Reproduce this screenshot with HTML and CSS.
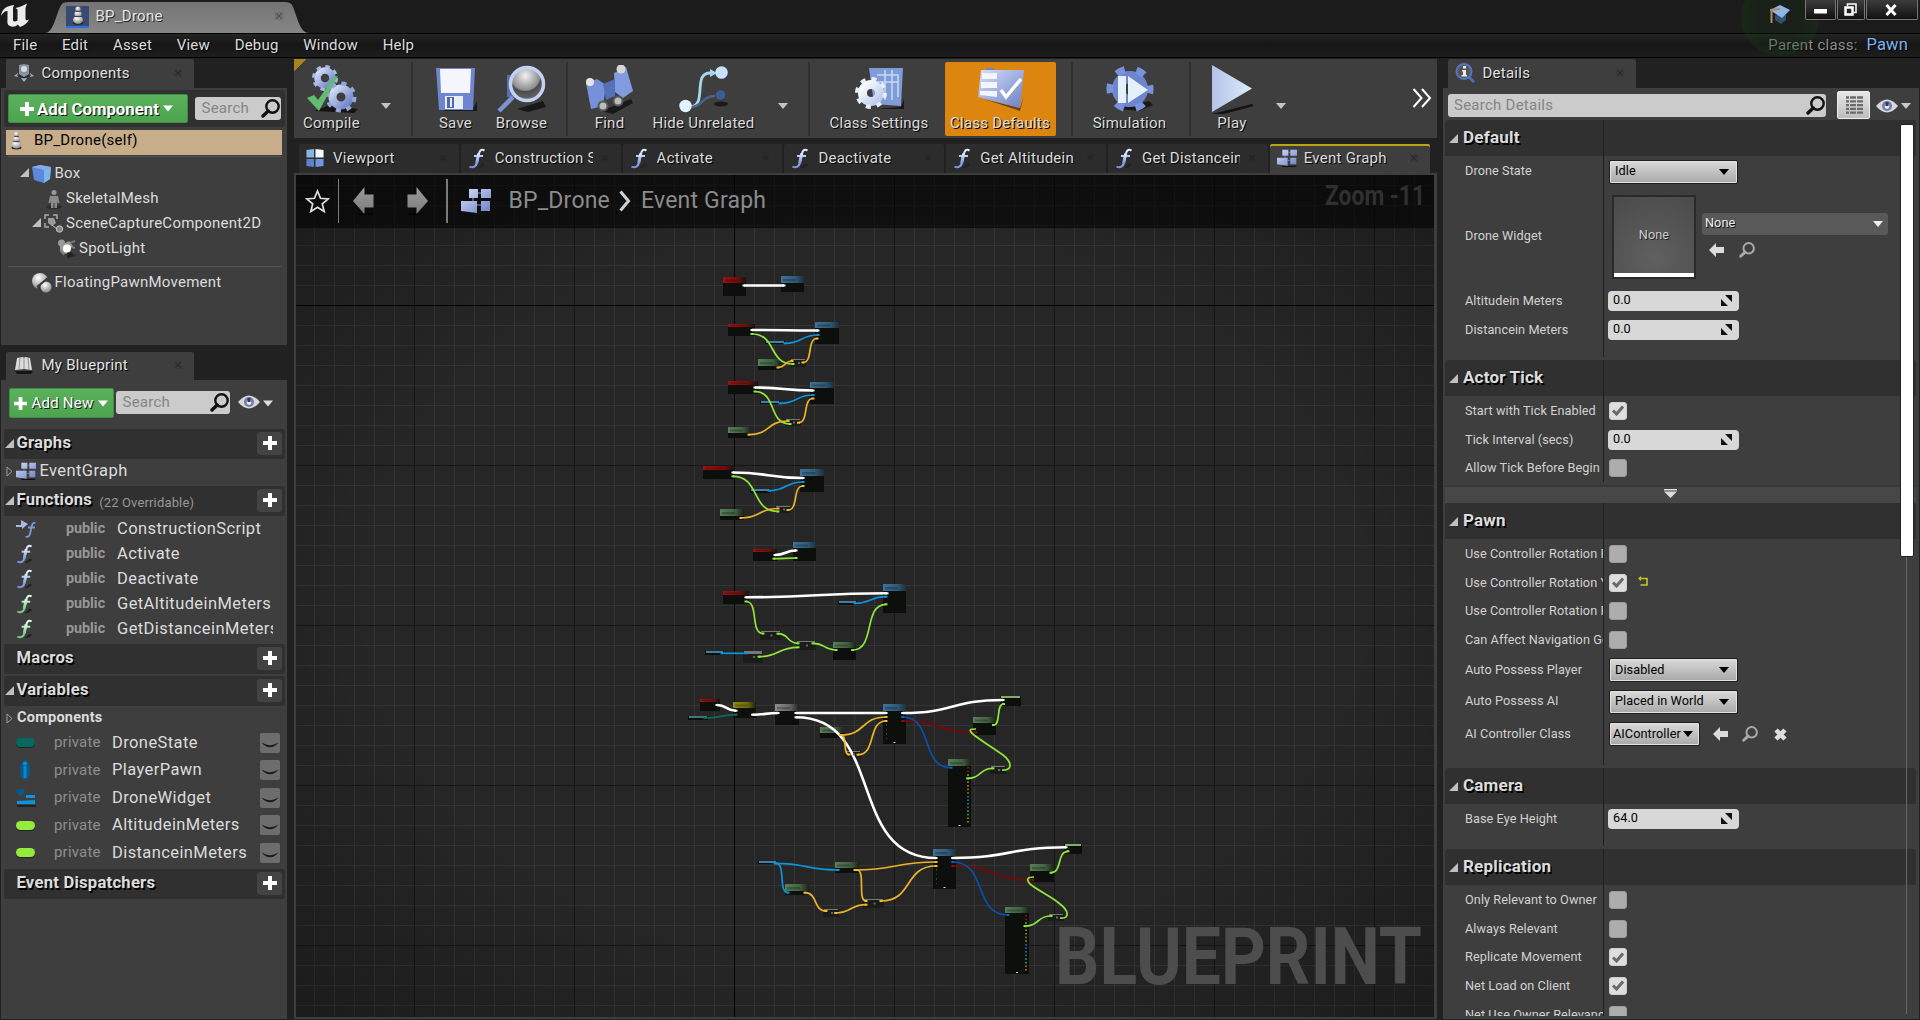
FILE: index.html
```html
<!DOCTYPE html>
<html lang="en">
<head>
<meta charset="utf-8">
<title>BP_Drone</title>
<link rel="stylesheet" href="styles.css">
</head>
<body>
<svg class="defs" width="0" height="0" aria-hidden="true">
  <defs>
    <linearGradient id="steel" x1="0" y1="0" x2="1" y2="1"><stop offset="0" stop-color="#d5e0fa"/><stop offset="1" stop-color="#6b7fc4"/></linearGradient>
    <linearGradient id="pale" x1="0" y1="0" x2="1" y2="1"><stop offset="0" stop-color="#ffffff"/><stop offset="1" stop-color="#b9c9ec"/></linearGradient>
    <linearGradient id="blueF" x1="0" y1="0" x2="0" y2="1"><stop offset="0" stop-color="#e4ecff"/><stop offset="1" stop-color="#7d93dd"/></linearGradient>
    <linearGradient id="greenF" x1="0" y1="0" x2="0" y2="1"><stop offset="0" stop-color="#e0ffe8"/><stop offset="1" stop-color="#72c98a"/></linearGradient>
    <linearGradient id="grayArrow" x1="0" y1="0" x2="0" y2="1"><stop offset="0" stop-color="#9b9b9b"/><stop offset="1" stop-color="#7c7c7c"/></linearGradient>
    <radialGradient id="ball" cx=".4" cy=".3" r=".7"><stop offset="0" stop-color="#fff"/><stop offset="1" stop-color="#8d8d8d"/></radialGradient>
    <radialGradient id="lens" cx=".45" cy=".25" r=".8"><stop offset="0" stop-color="#f2f2f2"/><stop offset=".55" stop-color="#8c8c8c"/><stop offset=".6" stop-color="#4c4c4c"/><stop offset="1" stop-color="#707070"/></radialGradient>
  </defs>
  <symbol id="i-plus" viewBox="0 0 14 14"><path d="M5 0h4v5h5v4H9v5H5V9H0V5h5z"/></symbol>
  <symbol id="i-down" viewBox="0 0 10 6"><path d="M0 0h10L5 6z"/></symbol>
  <symbol id="i-open" viewBox="0 0 9 9"><path d="M9 0v9H0z"/></symbol>
  <symbol id="i-shut" viewBox="0 0 7 11"><path d="M1 1v9l5-4.5z" fill="none" stroke="#9c9c9c"/></symbol>
  <symbol id="i-x" viewBox="0 0 8 8"><path d="M.5.5h7v7h-7z" fill="none" stroke="#2d2d2d" opacity=".4"/><path d="M1.500 1.500l5 5M6.500 1.500l-5 5" stroke="#202020" stroke-width="1.500"/></symbol>
  <symbol id="i-mag" viewBox="0 0 19 19"><circle cx="11.500" cy="7.500" r="6.200" fill="none" stroke="currentColor" stroke-width="2.400"/><path d="M7.200 12L2 17" stroke="currentColor" stroke-width="3.400" stroke-linecap="round"/></symbol>
  <symbol id="i-eye" viewBox="0 0 22 14"><path d="M0 7Q11-6 22 7Q11 20 0 7z" fill="#d8d8d8"/><circle cx="11" cy="7" r="5" fill="#6c7fb0"/><circle cx="11" cy="7.500" r="2.400" fill="#e4e9f5"/><path d="M9.500 3h3v4h-3z" fill="#343b57"/></symbol>
  <symbol id="i-pawn" viewBox="0 0 12 20"><ellipse cx="6" cy="18" rx="5.500" ry="1.800" fill="#222"/><ellipse cx="6" cy="14.500" rx="5.200" ry="4.300" fill="url(#ball)"/><ellipse cx="6" cy="8.500" rx="3.800" ry="3.400" fill="url(#ball)"/><circle cx="6" cy="3.200" r="2.800" fill="url(#ball)"/><path d="M2.500 11h7M3.500 5.700h5" stroke="#3c3c3c"/></symbol>
  <symbol id="i-f" viewBox="0 0 18 21"><path d="M9 20l6-5 2 2-5 3z" fill="#222" stroke="none"/><path d="M16.500 2.600C13 .2 11.300 3.500 10.600 7L9 14.500C8.200 18.500 5.500 20.300 1.500 18.600M6 8h9" fill="none" stroke-width="2.100"/><path d="M10.700 5.500L8.600 15.500" stroke-width="3"/></symbol>
  <symbol id="i-graph" viewBox="0 0 30 27"><path d="M7 25h22v2H9z" fill="#111"/><path d="M8 1h9v9H8zM20 1h10v9H20zM20 13h9v10h-9zM0 13h16v12L0 23z" fill="url(#steel)"/><path d="M12 10v3M17 5h3M16 17h4" stroke="#8ea0d8"/></symbol>
  <symbol id="i-viewport" viewBox="0 0 18 20"><path d="M0 1l8-1v9H0z" fill="#86b6e2"/><path d="M9.500 0L18 1v8H9.500z" fill="#f3f9ff"/><path d="M0 10.500h8V19l-8-1z" fill="#5b82c8"/><path d="M9.500 10.500H18V18l-8.500 1z" fill="#7097dc"/></symbol>
  <symbol id="i-arrow" viewBox="0 0 21 28"><path d="M3 26h18l-3 2H7z" fill="#000" opacity=".6"/><path d="M0 14L11.500 0v7.500H20.500v13h-9V27z" fill="url(#grayArrow)"/></symbol>
  <symbol id="i-use" viewBox="0 0 15 14"><path d="M0 7L7 0v4h8v6H7v4z" fill="#dcdcdc"/></symbol>
  <symbol id="i-spin" viewBox="0 0 11 11"><path d="M4 0h7v7zM0 4v7h7z" fill="#111"/></symbol>
  <symbol id="i-check" viewBox="0 0 12 11"><path d="M1 5.500L4.500 9 11 1.500" fill="none" stroke="#6a6a6a" stroke-width="3"/></symbol>
  <symbol id="i-lid" viewBox="0 0 20 20"><path d="M1.500 9.500Q6 12 10 12.300 14 12 18.500 9.500 15 14 10 14.300 5 14 1.500 9.500z" fill="#1c1c1c"/></symbol>
</svg>

<div class="app">
  <header class="titlebar">
    <svg class="logo" width="30" height="28" viewBox="0 0 30 28"><path d="M0 15C1 8 5 5 13 4L12 7V18.500c0 2.500 2 2.500 4.500 1V8.500L14.500 7C19 6 22 5 26 2.500L24.500 7V17.500c0 2 1.500 2.200 3.500 1C26 22.500 23 24.500 19 26L16.800 23.500C14 26.500 9 26.300 7 23.500C6 22 6.500 19 6.500 17V10C3.500 10 1.500 12 0 15z" fill="#ececec"/></svg>
    <div class="doc-tab">
      <svg class="doc-shape" width="264" height="31" viewBox="0 0 264 31"><defs><linearGradient id="tabg" x1="0" y1="0" x2="0" y2="1"><stop offset="0" stop-color="#747474"/><stop offset="1" stop-color="#868686"/></linearGradient></defs><path d="M0 31C10 31 12 5 18 1Q20 0 24 0H240Q245 0 247 3C252 12 254 31 264 31z" fill="url(#tabg)"/></svg>
      <span class="doc-icon"><svg width="12" height="19"><use href="#i-pawn"/></svg></span>
      <span class="doc-name">BP_Drone</span>
      <svg class="close" width="8" height="8"><use href="#i-x"/></svg>
    </div>
    <span class="glow"></span>
    <svg class="cap" width="20" height="20" viewBox="0 0 20 20"><path d="M5 10v5l6 4 5-4v-5z" fill="#33506f"/><path d="M0 5L10 0l10 5-8 8z" fill="#8fb6e6"/><path d="M0 5l10-1M1.500 5.500V18" stroke="#b78b55" stroke-width="2"/></svg>
    <div class="win-buttons">
      <span class="wb wb-min"><svg width="13" height="5"><path d="M0 0h13v4.500H0z" fill="#fff"/></svg></span>
      <span class="wb wb-max"><svg width="13" height="13" viewBox="0 0 13 13"><path d="M3.500 3.500V1h8.500v8.500H9.500" fill="none" stroke="#fff" stroke-width="1.500"/><path d="M1.500 4.500h7v7h-7z" fill="none" stroke="#fff" stroke-width="2.500"/></svg></span>
      <span class="wb wb-close"><svg width="12" height="12" viewBox="0 0 12 12"><path d="M1.500 1l9 10M10.500 1l-9 10" stroke="#fff" stroke-width="3"/></svg></span>
    </div>
  </header>

  <nav class="menubar">
    <span>File</span><span>Edit</span><span>Asset</span><span>View</span><span>Debug</span><span>Window</span><span>Help</span>
    <span class="parent">Parent class:</span><a class="parent-link">Pawn</a>
  </nav>

  <main class="workspace">
    <div class="left">
      <section class="dock dock-components">
        <div class="dock-tab">
          <svg width="20" height="20" viewBox="0 0 20 20"><path d="M5 2l5-1 5 1v9l-5 3-5-3z" fill="#8793a3"/><circle cx="10" cy="6" r="3" fill="#d5dbe3"/><path d="M0 13l4-3v4zM20 13l-4-3v4zM10 19l-3-4h6z" fill="#a7b3c2"/><path d="M3 12l7 3 7-3" fill="none" stroke="#20252c"/></svg>
          <span>Components</span><svg class="close" width="8" height="8"><use href="#i-x"/></svg>
        </div>
        <div class="panel">
          <div class="comp-bar">
            <button class="green add-component"><svg width="14" height="14"><use href="#i-plus"/></svg><b>Add Component</b><svg width="10" height="7"><use href="#i-down"/></svg></button>
            <div class="search search-comp"><span>Search</span><svg width="19" height="19"><use href="#i-mag"/></svg></div>
          </div>
          <div class="row-self"><svg width="11" height="19"><use href="#i-pawn"/></svg><span>BP_Drone(self)</span></div>
          <hr>
          <div class="tree">
            <div class="t-row lv1"><svg width="9" height="9" class="tri"><use href="#i-open"/></svg><svg width="20" height="20" viewBox="0 0 20 20"><path d="M0 3l8-2 11 2-1 12-6 4L2 16z" fill="#5e86da"/><path d="M0 3l8-2 11 2-7 3z" fill="#8aa9ea"/><path d="M12 6l7-3-1 12-6 4z" fill="#79b7ea"/></svg><span>Box</span></div>
            <div class="t-row lv2"><svg width="20" height="20" viewBox="0 0 20 20"><ellipse cx="10" cy="18" rx="8" ry="2" fill="#2c2c2c"/><circle cx="10" cy="3.500" r="2.500" fill="#999"/><path d="M6 7h8l1.500 7h-2L13 11v8h-2.500v-5h-1v5H7v-8l-.5 3h-2z" fill="#8c8c8c"/></svg><span>SkeletalMesh</span></div>
            <div class="t-row lv2b"><svg width="9" height="9" class="tri"><use href="#i-open"/></svg><svg width="20" height="20" viewBox="0 0 20 20"><path d="M1 5V1h4M9 1h4v4M1 9v4h4" fill="none" stroke="#aaa" stroke-width="1.500"/><path d="M4 4h6l2 5-4 3-4-3z" fill="#9b9b9b"/><path d="M8 11l5 4" stroke="#ccc"/><circle cx="15.500" cy="15" r="3.200" fill="#888" stroke="#c4c4c4"/></svg><span>SceneCaptureComponent2D</span></div>
            <div class="t-row lv3"><svg width="20" height="20" viewBox="0 0 20 20"><path d="M10 10l9 7-9 2z" fill="#242424"/><circle cx="4.500" cy="4" r="3.500" fill="#9a9a9a"/><path d="M3 7l9-5 4 5-7 8-6-2z" fill="#9c9c9c"/><circle cx="10" cy="9.500" r="4" fill="#fff"/><path d="M13 4l5-2M15 8l3 1M3 11l4 5" stroke="#777" stroke-width="2"/></svg><span>SpotLight</span></div>
          </div>
          <hr>
          <div class="tree tree-move"><div class="t-row lv1f"><svg width="20" height="20" viewBox="0 0 20 20"><circle cx="8" cy="8" r="8" fill="url(#ball)"/><path d="M5 15L17 5l3 9-5 5-6 1z" fill="#3a3a3a"/><circle cx="14" cy="14" r="5.500" fill="url(#ball)"/><path d="M5 14L16 5" stroke="#3a3a3a" stroke-width="2"/></svg><span>FloatingPawnMovement</span></div></div>
        </div>
      </section>

      <section class="dock dock-blueprint">
        <div class="dock-tab">
          <svg width="20" height="20" viewBox="0 0 20 20"><path d="M1 16h18l-2 3H3z" fill="#151515"/><path d="M3 3l6-1 1 1 1-1 5 1 2 12-8-1-9 1z" fill="#dcdcdc"/><path d="M6 3L5 14M10 3v11M14 3l1 11" stroke="#8f8f8f"/></svg>
          <span>My Blueprint</span><svg class="close" width="8" height="8"><use href="#i-x"/></svg>
        </div>
        <div class="panel">
          <div class="bp-bar">
            <button class="green add-new"><svg width="13" height="13"><use href="#i-plus"/></svg><span>Add New</span><svg width="10" height="7"><use href="#i-down"/></svg></button>
            <div class="search search-bp"><span>Search</span><svg width="19" height="19"><use href="#i-mag"/></svg></div>
            <svg class="eye" width="22" height="14"><use href="#i-eye"/></svg><svg class="eye-drop" width="10" height="7"><use href="#i-down"/></svg>
          </div>
          <div class="cat"><svg width="9" height="9" class="tri"><use href="#i-open"/></svg><b>Graphs</b><span class="add"><svg width="14" height="14"><use href="#i-plus"/></svg></span></div>
          <div class="g-row"><svg width="7" height="11"><use href="#i-shut"/></svg><svg width="20" height="18"><use href="#i-graph"/></svg><span>EventGraph</span></div>
          <div class="cat"><svg width="9" height="9" class="tri"><use href="#i-open"/></svg><b>Functions</b><small>(22 Overridable)</small><span class="add"><svg width="14" height="14"><use href="#i-plus"/></svg></span></div>
          <div class="fn-list">
            <div class="fn"><svg width="20" height="20" viewBox="0 0 20 20"><path d="M0 6h5V1l7 4-6 5V8H0z" fill="#a9b9e0"/><path d="M19.500 4c-3-1-3.500 2-4 4l-1.300 6c-.6 3-2 4.500-4.700 3.500M12 8.500h7" fill="none" stroke="#8196dc" stroke-width="1.800"/></svg><b>public</b><span>ConstructionScript</span></div>
            <div class="fn"><svg class="fb" width="17" height="20"><use href="#i-f"/></svg><b>public</b><span>Activate</span></div>
            <div class="fn"><svg class="fb" width="17" height="20"><use href="#i-f"/></svg><b>public</b><span>Deactivate</span></div>
            <div class="fn"><svg class="fg" width="17" height="20"><use href="#i-f"/></svg><b>public</b><span>GetAltitudeinMeters</span></div>
            <div class="fn"><svg class="fg" width="17" height="20"><use href="#i-f"/></svg><b>public</b><span>GetDistanceinMeters</span></div>
          </div>
          <div class="cat cat-gap"><i class="tri"></i><b>Macros</b><span class="add"><svg width="14" height="14"><use href="#i-plus"/></svg></span></div>
          <div class="cat"><svg width="9" height="9" class="tri"><use href="#i-open"/></svg><b>Variables</b><span class="add"><svg width="14" height="14"><use href="#i-plus"/></svg></span></div>
          <div class="sub"><svg width="7" height="11"><use href="#i-shut"/></svg><b>Components</b></div>
          <div class="var-list">
            <div class="var"><i class="pill teal"></i><em>private</em><span>DroneState</span><svg class="lid" width="20" height="20"><use href="#i-lid"/></svg></div>
            <div class="var"><svg class="v-ic" width="18" height="20" viewBox="0 0 18 20"><path d="M6 2l3-2 3 2 2 6-1 9-4 3-4-3-1-9z" fill="#075b8d"/><circle cx="9" cy="3.500" r="2" fill="#0a90da"/><path d="M7.500 6h3v12h-3z" fill="#0f86c8"/></svg><em>private</em><span>PlayerPawn</span><svg class="lid" width="20" height="20"><use href="#i-lid"/></svg></div>
            <div class="var"><svg class="v-ic" width="20" height="20" viewBox="0 0 20 20"><path d="M0 3q2-4 4.500-1Q7-2 9 3L4.500 9z" fill="#07598c"/><path d="M10 7h9v3h-9zM1 13l18-1v4H1z" fill="#0b93dc"/><path d="M1 17h19v2H1z" fill="#222"/></svg><em>private</em><span>DroneWidget</span><svg class="lid" width="20" height="20"><use href="#i-lid"/></svg></div>
            <div class="var"><i class="pill lime"></i><em>private</em><span>AltitudeinMeters</span><svg class="lid" width="20" height="20"><use href="#i-lid"/></svg></div>
            <div class="var"><i class="pill lime"></i><em>private</em><span>DistanceinMeters</span><svg class="lid" width="20" height="20"><use href="#i-lid"/></svg></div>
          </div>
          <div class="cat"><i class="tri"></i><b>Event Dispatchers</b><span class="add"><svg width="14" height="14"><use href="#i-plus"/></svg></span></div>
        </div>
      </section>
    </div>

    <div class="center">
      <div class="toolbar">
        <div class="tool w76"><svg width="52" height="50" viewBox="0 0 52 50">
          <path d="M8 46l16-6 28 4-4 4z" fill="#151515"/>
          <circle cx="19" cy="13" r="7.500" fill="none" stroke="url(#steel)" stroke-width="6.500"/><circle cx="19" cy="13" r="11.500" fill="none" stroke="#a9b8e6" stroke-width="3" stroke-dasharray="4.500 4.530"/>
          <circle cx="35" cy="32" r="8.500" fill="none" stroke="url(#steel)" stroke-width="8"/><circle cx="35" cy="32" r="13.500" fill="none" stroke="#97a6da" stroke-width="4" stroke-dasharray="5 5.603"/>
          <path d="M1 33l7-3 4 5L28 12l4-1-19 35z" fill="#62bd72"/></svg><span>Compile</span></div>
        <div class="drop w32"><svg width="10" height="6"><use href="#i-down"/></svg></div>
        <i class="sep s1"></i>
        <div class="tool w66"><svg width="42" height="50" viewBox="0 0 42 50"><path d="M5 42h34l4-8v12H10z" fill="#1a1a1a"/><path d="M1 3h39l-2 42H4z" fill="#6f86cf"/><path d="M5 4h31l-1 24H6z" fill="#f4f6fc"/><path d="M10 31h18v13H10z" fill="#e8edf8"/><path d="M12 32h7v11h-7z" fill="#5068b0"/><path d="M15 33h2v9h-2z" fill="#e8edf8"/></svg><span>Save</span></div>
        <div class="tool w66"><svg width="50" height="50" viewBox="0 0 50 50"><path d="M20 44l26-8 3 6-18 5z" fill="#191919"/><path d="M10 10h8v22h-8z" fill="#5b6fae"/><path d="M2 46L16 32" stroke="#7d93d8" stroke-width="4.500"/><circle cx="30" cy="19" r="16.500" fill="url(#lens)" stroke="#c3d2f4" stroke-width="3.500"/></svg><span>Browse</span></div>
        <i class="sep s2"></i>
        <div class="tool w66"><svg width="50" height="50" viewBox="0 0 50 50"><path d="M16 46l30-12 2 4-20 11z" fill="#191919"/><path d="M1 18l11-4 9 6-3 21-12 3z" fill="#7690da"/><path d="M29 8l12-6 7 24-10 7-8-6z" fill="#829be0"/><path d="M18 19l12-5v17l-9 4z" fill="#5670b6"/><circle cx="5" cy="17" r="4" fill="#e4e4e4"/><circle cx="36" cy="4" r="4.500" fill="#d6d6d6"/><circle cx="18" cy="41" r="4.500" fill="#bbb" stroke="#555" stroke-width="2"/><circle cx="33" cy="36" r="4.500" fill="#bbb" stroke="#555" stroke-width="2"/></svg><span>Find</span></div>
        <div class="tool w122"><svg width="50" height="50" viewBox="0 0 50 50"><ellipse cx="42" cy="39" rx="7" ry="2.500" fill="#1a1a1a"/><path d="M10 42C30 42 12 7 32 8" fill="none" stroke="#a9d6ea" stroke-width="2.800"/><path d="M31 4l7 4-7 4z" fill="#a9d6ea"/><path d="M12 42c12 0 10-11 24-11" fill="none" stroke="#4a6484" stroke-width="2.500"/><circle cx="6.500" cy="41" r="6.200" fill="#e4f1ff"/><circle cx="42.500" cy="7.500" r="6.300" fill="#c6e2ff"/><circle cx="41.500" cy="30" r="4.800" fill="#3d5b96"/></svg><span>Hide Unrelated</span></div>
        <div class="drop w36"><svg width="10" height="6"><use href="#i-down"/></svg></div>
        <i class="sep s3"></i>
        <div class="tool w131"><svg width="50" height="50" viewBox="0 0 50 50"><path d="M20 44l26-2 3-8v10z" fill="#181818"/><path d="M14 3h34l-2 38-27-2z" fill="#7f9bd8"/><path d="M22 10h21v22M22 17h21M30 5v30M37 5v30" fill="none" stroke="#c7dcf5" stroke-width="1.500"/><circle cx="16" cy="28" r="8.500" fill="none" stroke="url(#pale)" stroke-width="9"/><circle cx="16" cy="28" r="14" fill="none" stroke="#e6eefa" stroke-width="4" stroke-dasharray="5 5.996"/></svg><span>Class Settings</span></div>
        <div class="tool active w111"><svg width="50" height="50" viewBox="0 0 50 50"><path d="M8 34l36 9 4-12-4 15z" fill="#6b4310"/><path d="M10 3h8v6h-8z" fill="#6e84c8"/><path d="M5 5h43l-4 38L2 32z" fill="url(#steel)"/><path d="M6 8h15v6H6zM5 17h16v6H5zM4 26h17v6L4 30z" fill="#f2f6ff"/><path d="M25 25l5 7L45 14" fill="none" stroke="#fff" stroke-width="3.500"/></svg><span>Class Defaults</span></div>
        <i class="sep s4"></i>
        <div class="tool w98"><svg width="50" height="50" viewBox="0 0 50 50"><path d="M14 44l30-8 4 4-14 6z" fill="#181818"/><circle cx="25" cy="24" r="12" fill="none" stroke="#6d85cf" stroke-width="12"/><circle cx="25" cy="24" r="20" fill="none" stroke="#7a92da" stroke-width="7" stroke-dasharray="9 11.944" stroke-dashoffset="4.500"/><path d="M13 11h8v27h-8zM23 11l20 14-20 13z" fill="#e4f1fb"/></svg><span>Simulation</span></div>
        <i class="sep s5"></i>
        <div class="tool w68"><svg width="46" height="50" viewBox="0 0 46 50"><path d="M2 49l40-10 2 2-30 8z" fill="#141414"/><path d="M2 0l40 23.500L2 47z" fill="url(#play)"/><defs><linearGradient id="play" x1="0" y1="0" x2="1" y2="0"><stop offset="0" stop-color="#b5c2ea"/><stop offset="1" stop-color="#dceef8"/></linearGradient></defs></svg><span>Play</span></div>
        <div class="drop w30"><svg width="10" height="6"><use href="#i-down"/></svg></div>
        <svg class="more" width="20" height="20" viewBox="0 0 20 20"><path d="M1.500 1l8 9-8 9M10 1l8 9-8 9" fill="none" stroke="#fff" stroke-width="2"/></svg>
      </div>

      <div class="tabs">
        <div class="tab"><svg width="18" height="19"><use href="#i-viewport"/></svg><span>Viewport</span><svg class="close" width="8" height="8"><use href="#i-x"/></svg></div>
        <div class="tab"><svg class="fb" width="18" height="21"><use href="#i-f"/></svg><span>Construction Script</span><svg class="close" width="8" height="8"><use href="#i-x"/></svg></div>
        <div class="tab"><svg class="fb" width="18" height="21"><use href="#i-f"/></svg><span>Activate</span><svg class="close" width="8" height="8"><use href="#i-x"/></svg></div>
        <div class="tab"><svg class="fb" width="18" height="21"><use href="#i-f"/></svg><span>Deactivate</span><svg class="close" width="8" height="8"><use href="#i-x"/></svg></div>
        <div class="tab"><svg class="fb" width="18" height="21"><use href="#i-f"/></svg><span>Get Altitudein</span><svg class="close" width="8" height="8"><use href="#i-x"/></svg></div>
        <div class="tab"><svg class="fb" width="18" height="21"><use href="#i-f"/></svg><span>Get Distancein</span><svg class="close" width="8" height="8"><use href="#i-x"/></svg></div>
        <div class="tab current"><svg width="20" height="18"><use href="#i-graph"/></svg><span>Event Graph</span><svg class="close" width="8" height="8"><use href="#i-x"/></svg></div>
      </div>

      <div class="canvas">
        <svg class="graph" viewBox="296 175 1138 842">
          <defs>
            <pattern id="minor" x="254" y="145" width="20" height="20" patternUnits="userSpaceOnUse"><path d="M0 0h20v1H0zM0 0h1v20H0z" fill="#343434"/></pattern>
            <pattern id="major" x="254" y="145" width="160" height="160" patternUnits="userSpaceOnUse"><path d="M0 0h160v1H0zM0 0h1v160H0z" fill="#161616"/></pattern>
            <linearGradient id="h-red"><stop offset="0" stop-color="#9c1212"/><stop offset=".6" stop-color="#7a0e0e"/><stop offset="1" stop-color="#151512"/></linearGradient>
            <linearGradient id="h-blue"><stop offset="0" stop-color="#3f7296"/><stop offset=".6" stop-color="#315c7a"/><stop offset="1" stop-color="#1d303c"/></linearGradient>
            <linearGradient id="h-green"><stop offset="0" stop-color="#587f57"/><stop offset=".6" stop-color="#446343"/><stop offset="1" stop-color="#1a241a"/></linearGradient>
            <linearGradient id="h-yellow"><stop offset="0" stop-color="#8e8a10"/><stop offset=".6" stop-color="#74710d"/><stop offset="1" stop-color="#1f1f10"/></linearGradient>
            <linearGradient id="h-gray"><stop offset="0" stop-color="#8c8c8c"/><stop offset=".6" stop-color="#696969"/><stop offset="1" stop-color="#222222"/></linearGradient>
            <radialGradient id="vig" cx=".5" cy=".5" r=".72"><stop offset=".6" stop-color="#000" stop-opacity="0"/><stop offset="1" stop-color="#000" stop-opacity=".3"/></radialGradient>
          </defs>
          <rect x="296" y="175" width="1138" height="842" fill="#262626"/>
          <rect x="296" y="175" width="1138" height="842" fill="url(#minor)"/>
          <rect x="296" y="175" width="1138" height="842" fill="url(#major)"/>
          <path d="M734 175h1v842h-1zM296 305h1138v1H296z" fill="#000"/>
          <rect x="296" y="175" width="1138" height="842" fill="url(#vig)"/>
          <text class="watermark" x="1055" y="984" textLength="367" lengthAdjust="spacingAndGlyphs">BLUEPRINT</text>
          <g id="nodes"></g>
          <g id="wires"></g>
          <g id="pins"></g>
        </svg>
        <div class="crumbs">
          <svg class="star" width="25" height="24" viewBox="0 0 25 24"><path d="M12.500 2l3 7.300 7.800.6-6 5 1.900 7.600-6.700-4.200-6.700 4.200 1.900-7.600-6-5 7.800-.6z" fill="none" stroke="#e0e0e0" stroke-width="1.700"/></svg>
          <i class="bar b1"></i>
          <svg class="back" width="21" height="28"><use href="#i-arrow"/></svg>
          <svg class="fwd" width="21" height="28"><use href="#i-arrow"/></svg>
          <i class="bar b2"></i>
          <svg class="c-graph" width="30" height="27"><use href="#i-graph"/></svg>
          <span class="c1">BP_Drone</span>
          <svg class="chev" width="12" height="22" viewBox="0 0 12 22"><path d="M1.500 1.500L9.500 11l-8 9.500" fill="none" stroke="#d0d0d0" stroke-width="3"/></svg>
          <span class="c2">Event Graph</span>
          <svg class="zoom" width="102" height="30"><text x="0" y="24" textLength="100" lengthAdjust="spacingAndGlyphs">Zoom -11</text></svg>
        </div>
      </div>
    </div>

    <section class="dock right">
      <div class="dock-tab">
        <svg width="20" height="20" viewBox="0 0 20 20"><path d="M14 14l5 5" stroke="#4a6dc0" stroke-width="3"/><circle cx="9" cy="8.500" r="7.500" fill="#555" stroke="#5576bf" stroke-width="2"/><path d="M8 3h3v2.500H8zM7 7h4v5h1v1.500H6.500V12H8V8.500H7z" fill="#ececec"/></svg>
        <span>Details</span><svg class="close" width="8" height="8"><use href="#i-x"/></svg>
      </div>
      <div class="panel details">
        <div class="d-bar">
          <div class="search search-det"><span>Search Details</span><svg width="19" height="19"><use href="#i-mag"/></svg></div>
          <span class="grid-btn"><svg width="17" height="18" viewBox="0 0 17 18"><path d="M0 1.500h17M0 5.300h17M0 9.100h17M0 12.900h17M0 16.700h17" stroke="#6b6b6b" stroke-width="2.300" stroke-dasharray="3 1 6 1 6 0"/></svg></span>
          <svg class="eye" width="22" height="14"><use href="#i-eye"/></svg><svg class="eye-drop" width="10" height="6"><use href="#i-down"/></svg>
        </div>
        <div class="d-body">
          <div class="sect">
            <h2><svg width="9" height="9"><use href="#i-open"/></svg>Default</h2>
            <div class="p h30"><label>Drone State</label><div class="v"><span class="combo">Idle<svg width="10" height="6"><use href="#i-down"/></svg></span></div></div>
            <div class="p h100"><label>Drone Widget</label><div class="v"><span class="thumb">None</span><div class="asset"><span class="asset-combo">None<svg width="10" height="6"><use href="#i-down"/></svg></span><div class="asset-tools"><svg width="15" height="14"><use href="#i-use"/></svg><svg class="dim" width="16" height="16"><use href="#i-mag"/></svg></div></div></div></div>
            <div class="p h29"><label>Altitudein Meters</label><div class="v"><span class="num">0.0<svg width="11" height="11"><use href="#i-spin"/></svg></span></div></div>
            <div class="p h29"><label>Distancein Meters</label><div class="v"><span class="num">0.0<svg width="11" height="11"><use href="#i-spin"/></svg></span></div></div>
            <div class="p pad13"><label></label></div>
          </div>
          <div class="sect sect-adv">
            <h2><svg width="9" height="9"><use href="#i-open"/></svg>Actor Tick</h2>
            <div class="p h29"><label>Start with Tick Enabled</label><div class="v"><i class="box on"><svg width="12" height="11"><use href="#i-check"/></svg></i></div></div>
            <div class="p h29"><label>Tick Interval (secs)</label><div class="v"><span class="num">0.0<svg width="11" height="11"><use href="#i-spin"/></svg></span></div></div>
            <div class="p h28"><label>Allow Tick Before Begin Play</label><div class="v"><i class="box"></i></div></div>
            <div class="advanced"><svg width="13" height="9" viewBox="0 0 13 9"><path d="M0 0h13v1.500H0zM0 2.500h13L6.500 9z" fill="#dcdcdc"/></svg></div>
          </div>
          <div class="sect">
            <h2><svg width="9" height="9"><use href="#i-open"/></svg>Pawn</h2>
            <div class="p h29"><label>Use Controller Rotation Pitch</label><div class="v"><i class="box"></i></div></div>
            <div class="p h29"><label>Use Controller Rotation Yaw</label><div class="v"><i class="box on"><svg width="12" height="11"><use href="#i-check"/></svg></i><svg class="reset" width="10" height="10" viewBox="0 0 10 10"><path d="M1.500 2.500h7.500V9H2.500" fill="none" stroke="#c3c826" stroke-width="1.600"/><path d="M0 2.500L3 0v5z" fill="#c3c826"/></svg></div></div>
            <div class="p h28"><label>Use Controller Rotation Roll</label><div class="v"><i class="box"></i></div></div>
            <div class="p h29"><label>Can Affect Navigation Generation</label><div class="v"><i class="box"></i></div></div>
            <div class="p h31"><label>Auto Possess Player</label><div class="v"><span class="combo">Disabled<svg width="10" height="6"><use href="#i-down"/></svg></span></div></div>
            <div class="p h32"><label>Auto Possess AI</label><div class="v"><span class="combo">Placed in World<svg width="10" height="6"><use href="#i-down"/></svg></span></div></div>
            <div class="p h34"><label>AI Controller Class</label><div class="v"><span class="combo narrow">AIController<svg width="10" height="6"><use href="#i-down"/></svg></span><svg class="u1" width="15" height="14"><use href="#i-use"/></svg><svg class="dim u2" width="16" height="16"><use href="#i-mag"/></svg><svg class="u3" width="13" height="13" viewBox="0 0 13 13"><path d="M2 2l9 9M11 2l-9 9" stroke="#dedede" stroke-width="4.500"/></svg></div></div>
            <div class="p pad14"><label></label></div>
          </div>
          <div class="sect">
            <h2><svg width="9" height="9"><use href="#i-open"/></svg>Camera</h2>
            <div class="p h29"><label>Base Eye Height</label><div class="v"><span class="num">64.0<svg width="11" height="11"><use href="#i-spin"/></svg></span></div></div>
            <div class="p pad13"><label></label></div>
          </div>
          <div class="sect">
            <h2><svg width="9" height="9"><use href="#i-open"/></svg>Replication</h2>
            <div class="p h29"><label>Only Relevant to Owner</label><div class="v"><i class="box"></i></div></div>
            <div class="p h29"><label>Always Relevant</label><div class="v"><i class="box"></i></div></div>
            <div class="p h28"><label>Replicate Movement</label><div class="v"><i class="box on"><svg width="12" height="11"><use href="#i-check"/></svg></i></div></div>
            <div class="p h29"><label>Net Load on Client</label><div class="v"><i class="box on"><svg width="12" height="11"><use href="#i-check"/></svg></i></div></div>
            <div class="p h29"><label>Net Use Owner Relevancy</label><div class="v"><i class="box"></i></div></div>
          </div>
          <i class="track"></i><i class="thumb-bar"></i>
        </div>
      </div>
    </section>
  </main>
</div>
<script src="graph.js"></script>
</body>
</html>
```
FILE: graph.js
```js
// Node list: [x, y, width, height, header colour, header height]
const nodes = [
  [723,277,23,19,'red',6],[781,276,23,16,'blue',7],
  [728,324,27,12,'red',3],[815,322,24,22,'blue',6],[765,341,20,3,'var',2],[758,359,23,11,'green',7],[790,359,16,8,'op',1],
  [728,381,30,13,'red',4],[810,382,24,22,'blue',6],[760,401,20,3,'var',2],[728,427,23,11,'green',6],[785,419,16,7,'op',1],
  [703,466,32,13,'red',4],[800,469,24,23,'blue',7],[750,489,20,4,'var',2],[720,509,24,11,'green',7],[775,506,16,7,'op',1],
  [753,549,24,12,'red',3],[793,542,23,19,'blue',6],
  [723,591,26,13,'red',4],[883,584,23,29,'blue',7],[838,601,19,4,'var',2],[760,631,21,9,'op',1],[796,641,20,9,'op',1],
  [833,642,23,18,'green',6],[705,651,19,4,'var',2],[743,651,20,12,'op',3],
  [700,699,20,12,'red',3],[688,716,20,4,'tvar',2],[733,702,23,16,'yellow',6],[775,704,24,21,'gray',7],[883,704,23,40,'blue',7],
  [820,727,24,11,'green',6],[845,751,16,7,'op',1],[973,717,23,18,'green',6],[1000,696,21,10,'set',2],[948,759,23,68,'green',7],[990,766,16,8,'op',1],
  [758,861,19,3,'var',2],[835,862,24,11,'green',6],[785,884,24,11,'green',7],[823,909,16,8,'op',1],[863,899,21,9,'op',1],
  [933,849,23,40,'blue',7],[1064,844,18,10,'set',2],[1030,864,24,18,'green',7],[1005,907,24,67,'green',6],[1048,914,16,7,'op',1]
];

// Wire list: [x1, y1, x2, y2, type]
const wires = [
  [744,285.5,784,285.5,'exec'],
  [752,330,818,330.5,'exec'],[785,343.3,818,335,'obj'],[752,334,793,364,'flt'],[778,367.500,792,361,'vec'],[803,362.500,817,338.500,'vec'],
  [755,387.500,813,390.500,'exec'],[780,403.300,813,395,'obj'],[755,391.500,790,424,'flt'],[749,434.700,788,421,'vec'],[798.500,422.700,813,398.500,'vec'],
  [733,472.500,803,478,'exec'],[769,490.700,803,482,'obj'],[733,476.300,778,511.500,'flt'],[741,518,778,508.500,'vec'],[788,510,803,486,'vec'],
  [775,555,796,550.500,'exec'],[774,558.700,796,558,'flt'],
  [746,597.300,887,593.300,'exec'],[855,603.300,886,596.700,'obj'],[746,601.500,763,633.500,'flt'],[778,633.700,798,643.300,'flt'],
  [813,643.300,836,650,'flt'],[852.700,650,886,604.300,'flt'],[722,653.300,746,653.300,'obj'],[759,656.700,798,647.300,'flt'],
  [717,705,736,710.700,'exec'],[705,718,736,714.700,'enum'],[752.700,714.700,778,713,'exec'],[796,713,886,713,'exec'],
  [796,717.300,936,858,'exec'],[840.700,735,886,717,'vec'],[841,735,849,754.500,'vec'],[858,754.700,886,721,'vec'],
  [902.700,713,1003,700,'exec'],[902.700,721,976,732.300,'hit'],[902.700,717,951,767.700,'struct'],[993.500,725,1003.500,704,'flt'],[967.700,778.300,993,768.300,'flt'],
  [775,863.300,838,870,'obj'],[776,863.300,788,892.700,'obj'],[855,870,936,862,'vec'],[805,892.700,826,911,'vec'],[835.700,913,866,904.700,'vec'],
  [857,870,866,901,'vec'],[881,901,936,866,'vec'],[952.700,858,1066,847.300,'exec'],[952.700,866,1033,880,'hit'],[952.700,862,1008,915,'struct'],
  [1051,872.700,1068,851.300,'flt'],[1025,926,1051,916,'flt']
];

// Wires that leave and re-enter against the reading direction
const loops = [
  'M1002 770C1013 771 1012 762 1003 755C992 747 983 742 974 735C967 729 971 729 976 729',
  'M1060 918C1071 919 1068 910 1060 904C1051 896 1040 892 1030 884C1025 878 1029 877 1034 877'
];

const NS = 'http://www.w3.org/2000/svg';
function add(parent, tag, attrs) {
  const el = document.createElementNS(NS, tag);
  for (const k in attrs) el.setAttribute(k, attrs[k]);
  document.getElementById(parent).appendChild(el);
}

for (const [x, y, w, h, kind, hh] of nodes) {
  add('nodes', 'rect', { x, y, width: w, height: h, class: 'node' + (kind === 'op' ? ' node-op' : '') });
  if (['var', 'tvar', 'op', 'set'].includes(kind)) {
    add('nodes', 'rect', { x: x + 1, y, width: w - 2, height: hh, class: 'cap-' + kind });
    if (kind === 'op') add('pins', 'rect', { x: x + w / 2, y: y + h / 2 - 1, width: 2, height: 2, class: 'glyph' });
  } else {
    add('nodes', 'rect', { x, y, width: w, height: hh, fill: `url(#h-${kind})` });
    add('nodes', 'rect', { x: x + 2, y: y + hh / 2 - .5, width: w * .55, height: hh / 3, class: 'title-shade' });
  }
  if (h > 60) {
    const c = ['#7a1414','#7a1414','#5f9a2a','#5f9a2a','#8f6c18','#8f6c18','#8f6c18','#8f6c18','#146c94','#146c94','#146c94','#6b3d80','#149464','#149464','#8f6c18','#8f6c18'];
    c.forEach((f, i) => add('pins', 'rect', { x: x + w - 4, y: y + 8 + i * 3.6, width: 2, height: 1.600, fill: f }));
    add('pins', 'rect', { x: x + w / 2 - 1, y: y + h - 2, width: 2, height: 1, fill: '#ddd' });
  }
  if (h === 40) {
    ['#14705c', '#7a1414', '#14705c', '#7a1414'].forEach((f, i) => add('pins', 'rect', { x: x + 3, y: y + 20 + i * 4.600, width: 1, height: 1.500, fill: f }));
    add('pins', 'rect', { x: x + w / 2 - 1, y: y + h - 2, width: 2, height: 1, fill: '#ddd' });
  }
}
for (const [x1, y1, x2, y2, type] of wires) {
  const k = Math.abs(x2 - x1) * .5 + Math.abs(y2 - y1) * .14;
  add('wires', 'path', { d: `M${x1} ${y1}C${x1 + k} ${y1} ${x2 - k} ${y2} ${x2} ${y2}`, class: 'wire ' + type });
  for (const [x, y] of [[x1, y1], [x2, y2]])
    add('pins', 'rect', { x: x - 1.500, y: y - 1, width: 3, height: 2, class: 'pin ' + type });
}
for (const d of loops) add('wires', 'path', { d, class: 'wire flt' });
```
FILE: styles.css
```css
* { box-sizing: border-box; }
body { margin: 0; background: #212121; color: #dcdcdc; font: 15px/1 Roboto, "Liberation Sans", sans-serif; letter-spacing: .25px; overflow: hidden; }
svg { display: block; flex: none; fill: currentColor; }
.defs { position: absolute; }
i, em { font-style: normal; }
.app { width: 1920px; height: 1020px; display: flex; flex-direction: column; overflow: hidden; }
.close { fill: none; opacity: .6; }
.fb { stroke: url(#blueF); }
.fg { stroke: url(#greenF); }

/* title bar */
.titlebar { position: relative; height: 33px; flex: none; display: flex; background: #1b1b1b; }
.logo { margin: 1px 0 0 1px; }
.doc-tab { position: relative; margin: 2px 0 0 14px; width: 264px; height: 31px; display: flex; align-items: center; padding-left: 21px; }
.doc-shape { position: absolute; left: 0; top: 0; }
.doc-icon { position: relative; width: 23px; height: 22px; background: #384a70; border-bottom: 2px solid #2e6fe0; display: flex; justify-content: center; margin-top: -1px; }
.doc-name { position: relative; margin: -2px auto 0 6.500px; color: #e6e6e6; text-shadow: 1px 1px 0 #222; }
.doc-tab .close { position: relative; margin: -3px 26px 0 0; opacity: .45; }
.glow { position: absolute; z-index: 1; left: 1740px; top: -22px; width: 80px; height: 78px; border-radius: 50%; background: radial-gradient(circle, rgba(20,50,20,.2) 30%, rgba(20,60,20,.35) 68%, rgba(20,60,20,0) 72%); }
.cap { position: relative; z-index: 2; margin: 5px 15px 0 auto; }
.win-buttons { position: relative; z-index: 2; display: flex; gap: 1px; margin-right: 2px; }
.wb { height: 20px; border: 1px solid #777; border-top: 0; background: linear-gradient(#3c3c3c, #111); display: flex; align-items: center; justify-content: center; border-radius: 0 0 2px 2px; }
.wb-min { width: 31px; padding-top: 4px; } .wb-max { width: 28px; padding-right: 2px; } .wb-close { width: 52px; padding-right: 3px; }

/* menu */
.menubar { height: 25px; flex: none; display: flex; align-items: center; padding: 0 12px 1px 13px; gap: 24.700px; letter-spacing: .2px; background: linear-gradient(#242424, #161616 45%, #1e1e1e); border: 1px solid #000; border-width: 1px 0; text-shadow: 1px 1px 0 #000; }
.menubar .parent { margin-left: auto; color: #8f8f8f; letter-spacing: .25px; }
.parent-link { margin-left: -16px; font-size: 16.500px; letter-spacing: .2px; color: #80b2f2; }

.workspace { flex: 1; min-height: 0; display: flex; padding: 1px 1px 1px; }
.left { width: 286px; display: flex; flex-direction: column; gap: 7px; margin-right: 7px; }
.dock { display: flex; flex-direction: column; }
.dock-tab { width: 188px; height: 29px; margin-left: 5px; background: #3e3e3e; border-radius: 2px 2px 0 0; display: flex; align-items: center; padding: 0 12px 2px 8px; color: #e2e2e2; text-shadow: 1px 1px 0 #000; }
.dock-tab span { margin: 1px auto 0 7.500px; }
.panel { flex: 1; background: #3e3e3e; overflow: hidden; }
.dock-components { height: 286px; }
.dock-blueprint { flex: 1; }
.dock-blueprint .dock-tab { height: 28px; padding-bottom: 3px; }

.green { display: flex; align-items: center; justify-content: center; font-family: inherit; color: #fff; background: linear-gradient(#5bb05b, #4da44f); border: 1px solid #3e8d40; border-radius: 2px; padding: 0; text-shadow: 1px 1px 0 #111; }
.search { display: flex; align-items: center; justify-content: space-between; height: 23px; background: #cbcbcb; border-radius: 3px; padding: 0 1px 0 6.500px; color: #858585; }
.search svg { color: #111; }
.comp-bar { height: 37px; margin: 2px 2px 3px 3px; background: #303030; border-radius: 3px; padding: 4px 4px 0; display: flex; }
.add-component { width: 180px; height: 29px; font-size: 16.800px; letter-spacing: 0; gap: 3px; padding-right: 3px; }
.add-component svg:last-child { margin-left: 1px; }
.search-comp { width: 86px; margin: 3px 0 0 7px; }
.row-self { height: 25px; margin: 0 5px; padding: 0 0 4px 5px; background: #c8ad8a; display: flex; align-items: center; color: #000; gap: 12px; }
hr { height: 1px; margin: 1px 6px 0 7px; border: 0; background: #555; }
.tree { padding: 4px 0; }
.tree-move { padding-top: 3px; }
.t-row { height: 25px; display: flex; align-items: center; }
.t-row span { margin-left: 2.500px; }
.tri { width: 9px; flex: none; color: #c0c0c0; margin-top: -2px; }
.t-row .tri { margin-right: 3px; }
.lv1 { padding-left: 19px; } .lv2 { padding-left: 43px; } .lv2b { padding-left: 31px; } .lv3 { padding-left: 56px; } .lv1f { padding-left: 31px; }
.lv3 span, .lv2 span { margin-left: 2px; }
.lv2b span { margin-left: 2px; }

/* my blueprint */
.bp-bar { height: 49px; display: flex; padding: 8px 0 0 8px; color: #ddd; }
.add-new { width: 105px; height: 30px; font-size: 15px; letter-spacing: .2px; gap: 4.500px; padding-right: 1px; }
.search-bp { width: 114px; margin: 3px 8px 0 2px; }
.bp-bar .eye { margin-top: 7px; } .bp-bar .eye-drop { margin: 12px 0 0 3px; }
.cat { height: 30px; margin: 0 2px 0 3px; background: #303030; border-radius: 2px; display: flex; align-items: center; padding: 0 3px 0 1px; font-size: 16.600px; text-shadow: 1.5px 1.5px 0 #000; }
.cat b { margin-left: 2.500px; margin-top: -1px; }
.cat small { font-size: 13px; color: #979797; margin: 3px 0 0 7px; text-shadow: none; letter-spacing: .15px; }
.add { margin-left: auto; width: 25px; height: 23px; background: #434343; border-radius: 3px; color: #fff; display: flex; align-items: center; justify-content: center; margin-top: -2px; }
.g-row { height: 27px; display: flex; align-items: center; padding: 0 0 3px 5px; font-size: 16.500px; letter-spacing: .4px; }
.g-row span { margin-left: 3.500px; } .g-row svg + svg { margin-left: 3px; }
.fn-list { padding: 0 0 3px; }
.fn { height: 25px; display: flex; align-items: center; padding-left: 15px; width: 272px; overflow: hidden; font-size: 16.500px; letter-spacing: .4px; white-space: nowrap; }
.fn svg { margin-right: auto; }
.fn b { width: 39px; font-size: 14.300px; letter-spacing: 0; color: #979797; margin-right: 12px; }
.fn span { width: 156px; overflow: hidden; line-height: 22px; }
.cat-gap { margin-bottom: 2px; }
.sub { height: 23px; display: flex; align-items: center; padding: 1px 0 0 5px; font-size: 14.500px; } .sub b { margin-left: 4px; }
.var-list { height: 140px; }
.var { height: 27.500px; display: flex; align-items: center; padding: 0 7px 0 15px; font-size: 16.500px; letter-spacing: .4px; }
.var em { font-size: 15px; letter-spacing: .2px; color: #8e8e8e; width: 58px; margin-left: auto; }
.var span { width: 148px; }
.pill { width: 19px; height: 9px; border-radius: 4.500px; box-shadow: 0 1px 0 #222; }
.teal { background: #07695e; } .lime { background: #93ec3b; }
.lid { background: #6d6d6d; border-radius: 2px; }

/* centre */
.center { width: 1143px; display: flex; flex-direction: column; margin-right: 6px; }
.toolbar { height: 79px; display: flex; align-items: flex-start; padding-top: 3px; background: linear-gradient(135deg, #a8831d 8.500px, #3e3e3e 9px); }
.tool { height: 74px; display: flex; flex-direction: column; align-items: center; padding-top: 3px; border-radius: 2px; text-shadow: 1px 1px 0 #000; white-space: nowrap; }
.tool svg { height: 50px; } .tool span { margin: 1px 1px 0 0; }
.active { background: #dc850f; }
.drop { height: 74px; display: flex; justify-content: center; padding-top: 41px; color: #c4c4c4; }
.w30 { width: 30px; } .w32 { width: 32px; } .w36 { width: 36px; } .w66 { width: 66px; } .w68 { width: 67px; } .w76 { width: 76px; } .w98 { width: 98px; } .w111 { width: 111px; } .w122 { width: 122px; } .w131 { width: 131px; }
.sep { width: 2px; height: 74px; background: #303030; flex: none; }
.s1 { margin: 0 10px 0 9px; } .s2 { margin: 0 9px 0 11px; } .s3 { margin: 0 4px 0 7px; } .s4 { margin: 0 8px 0 15px; } .s5 { margin: 0 8px 0 10px; }
.more { margin: 26px 5px 0 auto; }
.tabs { height: 35px; padding: 6px 0 0 5px; display: flex; gap: 2px; }
.tab { width: 159.800px; height: 29px; background: #2c2c2c; border-radius: 2px 2px 0 0; display: grid; grid-template-columns: 27px 98px 1fr; align-items: center; padding: 0 12px 1px 7px; text-shadow: 1px 1px 0 #000; }
.tab span { overflow: hidden; white-space: nowrap; line-height: 20px; margin-top: -1px; }
.tab .close { justify-self: end; }
.tab.current { background: #3e3e3e; box-shadow: inset 0 2px 0 #b7a512; }
.canvas { position: relative; flex: 1; min-height: 0; border: 2px solid #3e3e3e; border-right-width: 3px; }
.graph { width: 1138px; height: 842px; }
.watermark { font: bold 80px Roboto, sans-serif; fill: #4d4d4d; letter-spacing: 0; }
.crumbs { position: absolute; left: 0; top: 0; right: 0; height: 53px; background: rgba(0,0,0,.58); display: flex; align-items: center; padding: 0 7px 2px 9px; font-size: 23px; letter-spacing: .2px; color: #8b8b8b; }
.bar { width: 1px; height: 44px; background: #7b7b7b; margin-top: 1px; }
.b1 { margin-left: 8px; } .b2 { margin-left: 18px; width: 2px; }
.back { margin-left: 14px; } .fwd { margin-left: 33px; transform: scaleX(-1); }
.c-graph { margin: 1px 18px 0 12.500px; } .chev { margin: 0 10px 0 9px; }
.zoom { margin-left: auto; align-self: flex-start; margin-top: 6px; font: bold 27px Roboto, sans-serif; fill: #303030; letter-spacing: 0; }
.node { fill: #0d0f0d; } .node-op { fill: #1a1c1a; opacity: .9; }
.title-shade { fill: #000; opacity: .25; }
.cap-var { fill: #3d82a6; } .cap-tvar { fill: #3c7b74; } .cap-op { fill: #777; } .cap-set { fill: #86ad67; }
.glyph { fill: #666; }
.wire { fill: none; stroke-width: 1.700; } .wire.exec { stroke-width: 2.600; }
.exec { stroke: #fff; } .obj { stroke: #0c93dc; } .flt { stroke: #8ee83c; } .vec { stroke: #eab32a; } .hit { stroke: #7e0404; } .struct { stroke: #0650ae; } .enum { stroke: #0a6b60; }
.pin { stroke: none; }
.pin.exec { fill: #fff; } .pin.obj { fill: #0c93dc; } .pin.flt { fill: #8ee83c; } .pin.vec { fill: #f3bb2b; } .pin.hit { fill: #9b0606; } .pin.struct { fill: #0a5fc8; } .pin.enum { fill: #0a6b60; }

/* details */
.right { width: 476px; }
.right .dock-tab { padding-left: 7px; }
.d-bar { height: 32px; padding: 3px 5px 0; display: flex; color: #c8c8c8; }
.search-det { width: 378px; margin-top: 3px; padding-left: 6px; }
.grid-btn { width: 33px; height: 28px; margin: 0 6px 0 11px; border-radius: 2px; border: 1px solid #ededed; background: linear-gradient(#e8e8e8, #bcbcbc); display: flex; align-items: center; justify-content: center; padding-left: 2px; }
.d-bar .eye { margin-top: 8px; } .d-bar .eye-drop { margin: 12px 0 0 3px; }
.d-body { position: relative; height: 896px; overflow: hidden; margin: 0 3px 0 2px; }
.sect { margin-bottom: 3px; }
.sect-adv { margin-bottom: 0; }
h2 { height: 36px; margin: 0; display: flex; align-items: center; gap: 5px; padding: 0 0 1px 4px; font-size: 17px; letter-spacing: .2px; text-shadow: 1.5px 1.5px 0 #000; background: linear-gradient(90deg, transparent 158px, #202020 158px 159px, transparent 159px) #303030; border-radius: 3px 3px 0 0; }
h2 svg { color: #c0c0c0; margin-top: 2px; }
.p { display: flex; font-size: 12.700px; letter-spacing: .07px; }
.p label { width: 159px; padding: 1px 0 0 20px; border-right: 1px solid #202020; display: flex; align-items: center; overflow: hidden; white-space: nowrap; color: #d2d2d2; flex: none; }
.v { flex: 1; display: flex; align-items: center; padding-left: 4px; }
.h28 { height: 28px; } .h29 { height: 29px; } .h30 { height: 30px; } .h31 { height: 31px; } .h32 { height: 32px; } .h34 { height: 34px; } .h100 { height: 100px; } .pad13 { height: 13px; } .pad14 { height: 14px; }
.combo { margin-left: 1px; margin-top: 1px; width: 129px; height: 24px; border: 1px solid #1e1e1e; border-radius: 2px; box-shadow: inset 0 0 0 1px #e2e2e2; background: linear-gradient(#dadada, #a8a8a8); color: #000; display: flex; align-items: center; justify-content: space-between; padding: 0 8px 0 5px; }
.combo.narrow { width: 91px; margin-top: 0; padding: 0 6px 0 3px; }
.num { width: 131px; height: 20px; border-radius: 4px; background: #d8d8d8; color: #000; display: flex; align-items: center; justify-content: space-between; padding: 0 7px 0 5px; }
.box { width: 18px; height: 18px; margin-left: 1px; border-radius: 3px; background: #adadad; border: 1px solid #9b9b9b; display: flex; align-items: center; justify-content: center; }
.box.on { background: #dedede; border-color: #cfcfcf; }
.reset { margin: -3px 0 0 11px; }
.thumb { width: 80px; height: 80px; margin: 2px 0 0 6px; background: radial-gradient(circle at 50% 80%, #606060, #4a4a4a); border-bottom: 4px solid #fff; box-shadow: 0 0 0 2px #2a2a2a; display: flex; align-items: center; justify-content: center; color: #ccc; text-shadow: 1px 1px 0 #222; }
.asset { margin-left: 8px; margin-top: -2px; }
.asset-combo { width: 186px; height: 22px; background: #595959; border-radius: 3px; display: flex; align-items: center; justify-content: space-between; padding: 0 5px 0 3px; color: #eee; text-shadow: 1px 1px 0 #111; }
.asset-tools { display: flex; gap: 15px; padding: 7px 0 0 7px; align-items: center; }
.dim { color: #a9a9a9; }
.u1 { margin-left: 13px; } .u2 { margin-left: 14px; } .u3 { margin-left: 16px; }
.advanced { height: 18px; margin-top: 3px; background: #474747; border-top: 2px solid #383838; display: flex; justify-content: center; padding: 2px 20px 0 0; }
.track { position: absolute; left: 461px; top: 10px; width: 1px; height: 884px; background: #666; }
.thumb-bar { position: absolute; left: 454.500px; top: 3.500px; width: 14px; height: 433px; background: #fff; border: 1px solid #222; border-radius: 2px; }
```
